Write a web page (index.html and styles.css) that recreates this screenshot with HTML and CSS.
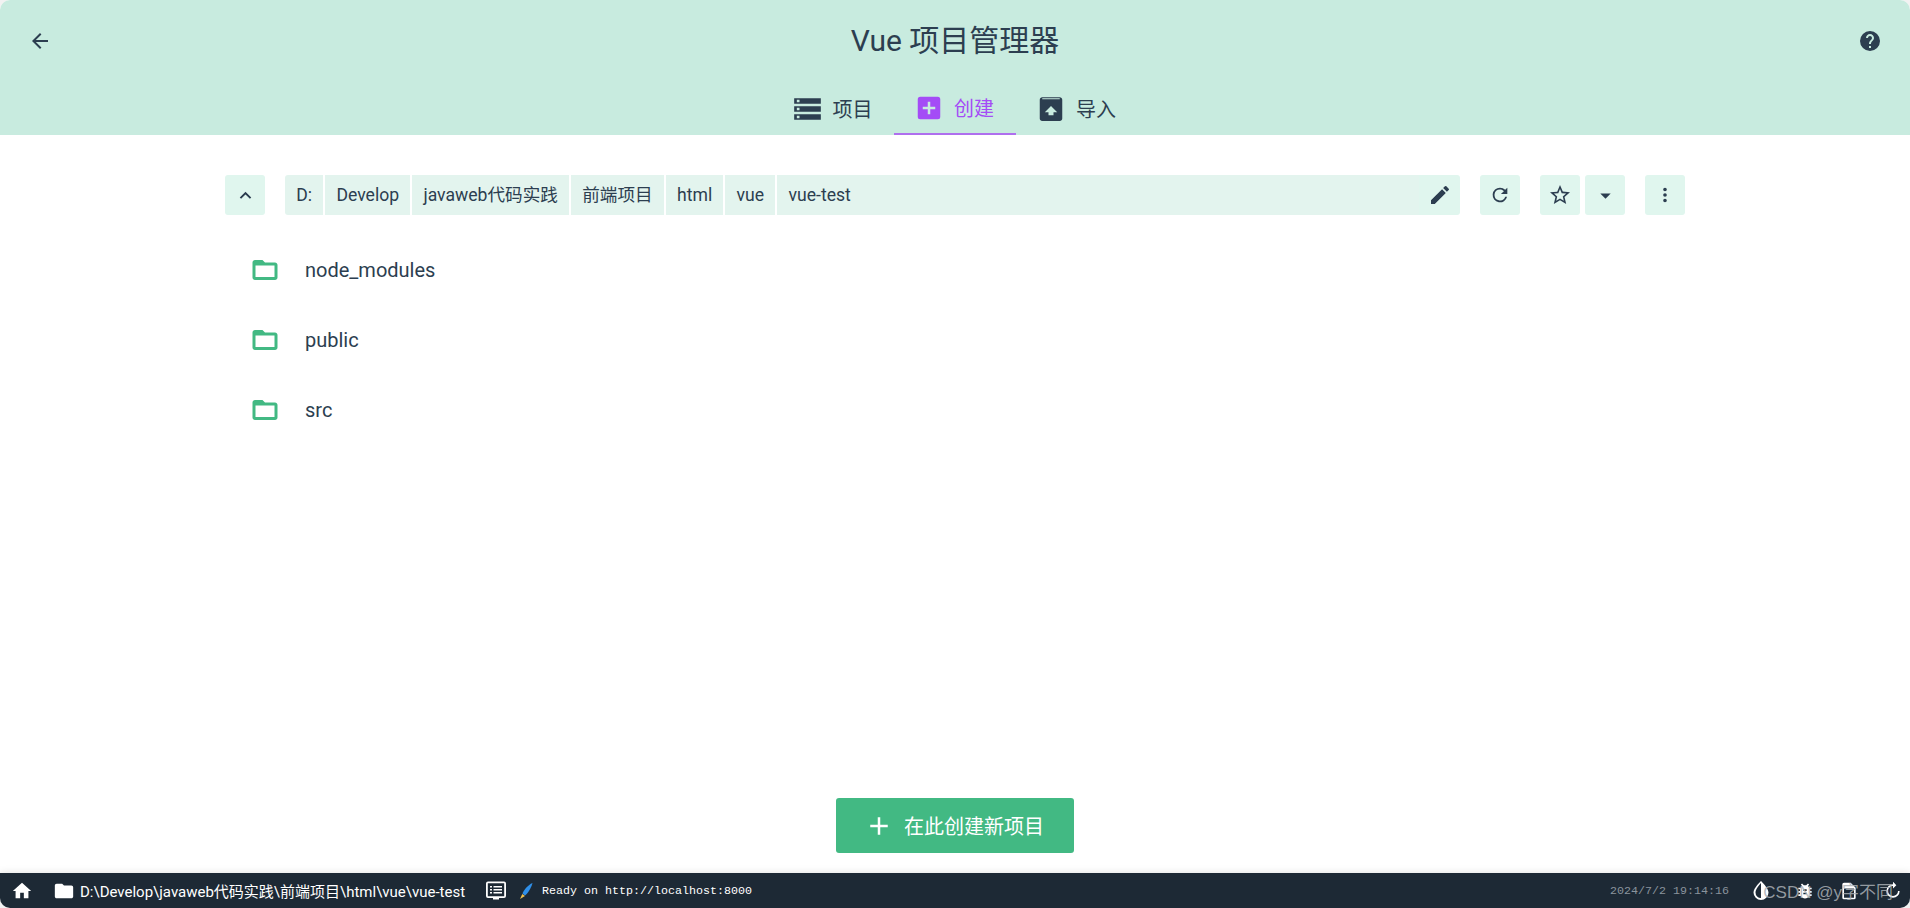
FILE: index.html
```html
<!DOCTYPE html>
<html lang="zh-CN">

<head>
  <meta charset="UTF-8" />
  <title>Vue 项目管理器</title>
  <link rel="stylesheet" href="styles.css">
</head>

<body>
  <div class="window">
    <header class="top">
      <div class="top-row">
        <button class="top-btn">
          <svg width="24" height="24" viewBox="0 0 24 24"><path d="M20 11H7.83l5.59-5.59L12 4l-8 8 8 8 1.41-1.41L7.83 13H20v-2z"/></svg>
        </button>
        <h1 class="title">Vue 项目管理器</h1>
        <button class="top-btn">
          <svg width="24" height="24" viewBox="0 0 24 24"><path d="M12 2a10 10 0 1 0 0 20 10 10 0 0 0 0-20zm1 17h-2v-2h2v2zm2.07-7.75l-.9.92C13.45 12.9 13 13.5 13 15h-2v-.5c0-1.1.45-2.1 1.17-2.83l1.24-1.26c.37-.36.59-.86.59-1.41 0-1.1-.9-2-2-2s-2 .9-2 2H8c0-2.21 1.79-4 4-4s4 1.79 4 4c0 .88-.36 1.68-.93 2.25z"/></svg>
        </button>
      </div>
      <nav class="tabs">
        <a class="tab tab-list">
          <svg width="27" height="32" viewBox="2 0 20 24"><path d="M2 20h20v-4H2v4zm2-3h2v2H4v-2zM2 4v4h20V4H2zm4 3H4V5h2v2zm-4 7h20v-4H2v4zm2-3h2v2H4v-2z"/></svg>
          <span>项目</span>
        </a>
        <a class="tab tab-active">
          <svg width="30" height="30" viewBox="0 0 24 24"><path d="M19 3H5a2 2 0 0 0-2 2v14a2 2 0 0 0 2 2h14a2 2 0 0 0 2-2V5a2 2 0 0 0-2-2zm-2 10h-4v4h-2v-4H7v-2h4V7h2v4h4v2z"/></svg>
          <span>创建</span>
        </a>
        <a class="tab">
          <svg width="30" height="30" viewBox="0 0 24 24"><path d="M19 2.500H5c-1.100 0-2 .9-2 2V19.500c0 1.100.9 2 2 2h14c1.100 0 2-.9 2-2V4.500c0-1.100-.9-2-2-2zM5 3.300h14v.8H5zM12 9.500l5 5h-3v2.500h-4v-2.500H7l5-5z" fill-rule="evenodd"/></svg>
          <span>导入</span>
        </a>
      </nav>
    </header>

    <main class="content">
      <div class="toolbar">
        <button class="tool-btn">
          <svg width="23" height="23" viewBox="0 0 24 24"><path d="M12 8l-6 6 1.41 1.41L12 10.830l4.590 4.580L18 14z"/></svg>
        </button>
        <div class="path">
          <span class="seg">D:</span>
          <span class="seg">Develop</span>
          <span class="seg">javaweb代码实践</span>
          <span class="seg">前端项目</span>
          <span class="seg">html</span>
          <span class="seg">vue</span>
          <span class="seg seg-last">vue-test</span>
          <button class="path-edit">
            <svg width="24" height="24" viewBox="0 0 24 24"><path d="M3 17.250V21h3.750L17.810 9.940l-3.750-3.750L3 17.250zM20.710 7.040a1 1 0 0 0 0-1.410l-2.340-2.340a1 1 0 0 0-1.410 0l-1.830 1.830 3.750 3.750 1.830-1.830z"/></svg>
          </button>
        </div>
        <button class="tool-btn">
          <svg width="22" height="22" viewBox="0 0 24 24"><path d="M17.650 6.350A7.960 7.960 0 0 0 12 4a8 8 0 1 0 7.730 10h-2.080A6 6 0 1 1 12 6c1.660 0 3.140.69 4.220 1.780L13 11h7V4l-2.350 2.350z"/></svg>
        </button>
        <div class="tool-group">
          <button class="tool-btn">
            <svg width="24" height="24" viewBox="0 0 24 24"><path d="M22 9.240l-7.190-.62L12 2 9.190 8.630 2 9.240l5.460 4.730L5.820 21 12 17.270 18.180 21l-1.630-7.030L22 9.240zM12 15.400l-3.760 2.270 1-4.280-3.320-2.880 4.380-.38L12 6.100l1.710 4.040 4.380.38-3.320 2.880 1 4.280L12 15.400z"/></svg>
          </button>
          <button class="tool-btn">
            <svg width="25" height="25" viewBox="0 0 24 24"><path d="M7 10l5 5 5-5z"/></svg>
          </button>
        </div>
        <button class="tool-btn">
          <svg width="22" height="22" viewBox="0 0 24 24"><path d="M12 8a2 2 0 1 0 0-4 2 2 0 0 0 0 4zm0 2a2 2 0 1 0 0 4 2 2 0 0 0 0-4zm0 6a2 2 0 1 0 0 4 2 2 0 0 0 0-4z"/></svg>
        </button>
      </div>

      <ul class="folders">
        <li class="folder">
          <svg width="30" height="30" viewBox="0 0 24 24"><path d="M20 6h-8l-2-2H4c-1.100 0-2 .9-2 2v12c0 1.100.9 2 2 2h16c1.100 0 2-.9 2-2V8c0-1.100-.9-2-2-2zm-.4 11.600H4.400V8.400h15.200z"/></svg>
          <span>node_modules</span>
        </li>
        <li class="folder">
          <svg width="30" height="30" viewBox="0 0 24 24"><path d="M20 6h-8l-2-2H4c-1.100 0-2 .9-2 2v12c0 1.100.9 2 2 2h16c1.100 0 2-.9 2-2V8c0-1.100-.9-2-2-2zm-.4 11.600H4.400V8.400h15.200z"/></svg>
          <span>public</span>
        </li>
        <li class="folder">
          <svg width="30" height="30" viewBox="0 0 24 24"><path d="M20 6h-8l-2-2H4c-1.100 0-2 .9-2 2v12c0 1.100.9 2 2 2h16c1.100 0 2-.9 2-2V8c0-1.100-.9-2-2-2zm-.4 11.600H4.400V8.400h15.200z"/></svg>
          <span>src</span>
        </li>
      </ul>

      <div class="actions">
        <button class="create-btn">
          <svg width="30" height="30" viewBox="0 0 24 24"><path d="M19 13h-6v6h-2v-6H5v-2h6V5h2v6h6v2z"/></svg>
          <span>在此创建新项目</span>
        </button>
      </div>
    </main>

    <footer class="status">
      <svg class="st-home" width="22" height="22" viewBox="0 0 24 24"><path d="M10 20v-6h4v6h5v-8h3L12 3 2 12h3v8z"/></svg>
      <svg class="st-folder" width="22" height="22" viewBox="0 0 24 24"><path d="M10 4H4c-1.100 0-2 .9-2 2v12c0 1.100.9 2 2 2h16c1.100 0 2-.9 2-2V8c0-1.100-.9-2-2-2h-8l-2-2z"/></svg>
      <span class="st-path">D:\Develop\javaweb代码实践\前端项目\html\vue\vue-test</span>
      <svg class="st-msg" width="24" height="24" viewBox="0 0 24 24"><path fill-rule="evenodd" d="M4 2.500h16a2 2 0 0 1 2 2V17a2 2 0 0 1-2 2h-5v1.500H9V19H4a2 2 0 0 1-2-2V4.500a2 2 0 0 1 2-2zM3.800 4.300v12.900h16.400V4.300zM6 7h2v1.500H6zm3.500 0H18v1.500H9.500zM6 10h2v1.500H6zm3.500 0H18v1.500H9.500zM6 13h2v1.500H6zm3.500 0H18v1.500H9.500z"/></svg>
      <svg class="st-brush" width="14" height="18" viewBox="0 0 14 18"><path d="M13.500 1C9 3 5 7.500 3.500 11.500l2.500 2C9 11 12.500 5.500 13.500 1z" fill="#2f8fe8"/><path d="M3.300 12L1 17l5-3z" fill="#f2c14e"/></svg>
      <span class="st-log">Ready on http://localhost:8000</span>
      <span class="st-time">2024/7/2 19:14:16</span>
      <div class="st-icons">
        <svg width="20" height="20" viewBox="2 3 20 20"><path d="M12 3S4.500 10 4.500 14.500a7.500 7.500 0 0 0 15 0C19.500 10 12 3 12 3zm0 17a5.500 5.500 0 0 1-5.500-5.500c0-2.700 3-6.700 5.500-9.500v15z"/></svg>
        <svg width="20" height="20" viewBox="0 0 24 24"><path d="M20 8h-2.810a6 6 0 0 0-1.820-1.960L17 4.410 15.590 3l-2.170 2.170a6 6 0 0 0-2.830 0L8.410 3 7 4.410l1.620 1.630C7.880 6.550 7.260 7.220 6.810 8H4v2h2.090c-.05.330-.09.660-.09 1v1H4v2h2v1c0 .34.040.67.090 1H4v2h2.810a6 6 0 0 0 10.380 0H20v-2h-2.090c.05-.33.090-.66.090-1v-1h2v-2h-2v-1c0-.34-.04-.67-.09-1H20V8zm-6 8h-4v-2h4v2zm0-4h-4v-2h4v2z"/></svg>
        <svg width="20" height="20" viewBox="0 0 24 24"><path d="M14 2H6a2 2 0 0 0-2 2v16a2 2 0 0 0 2 2h12a2 2 0 0 0 2-2V8l-6-6zm4 18H6V9h12v11z"/></svg>
        <svg width="20" height="20" viewBox="0 0 24 24"><path d="M12 4a8 8 0 1 0 8 8h-2a6 6 0 1 1-6-6v3l4-4-4-4v3z"/></svg>
      </div>
      <span class="watermark">CSDN @y字不同</span>
    </footer>
  </div>
</body>

</html>
```

FILE: styles.css
```css
* {
  box-sizing: border-box;
}

html,
body {
  height: 100%;
}

body {
  margin: 0;
  background-color: #f2f2f2;
  color: #2c3e50;
  font-family: Roboto, "Noto Sans CJK SC", sans-serif;
  overflow: hidden;
}

button {
  border: 0;
  padding: 0;
  color: inherit;
  font: inherit;
  background: none;
}

svg {
  display: block;
  flex: none;
  fill: currentColor;
}

.window {
  height: 908px;
  display: flex;
  flex-direction: column;
  background-color: #fff;
  border-radius: 10px;
  overflow: hidden;
}

/* header */
.top {
  height: 135px;
  flex: none;
  background-color: #c8ebdf;
}

.top-row {
  height: 82px;
  display: flex;
  align-items: center;
  justify-content: space-between;
  padding: 0 28px;
}

.top-btn {
  width: 24px;
  height: 24px;
}

.title {
  margin: 0;
  font-size: 30px;
  font-weight: 400;
  line-height: 1;
}

.tabs {
  height: 53px;
  display: flex;
  justify-content: center;
}

.tab {
  width: 122px;
  display: flex;
  align-items: center;
  justify-content: center;
  gap: 10px;
  font-size: 20px;
}

.tab svg {
  margin-left: -2px;
}

.tab-list {
  gap: 12px;
}

.tab-list svg {
  margin-left: 0;
}

.tab-active {
  color: #a44cf6;
  border-bottom: 2px solid #af6fee;
}

/* toolbar */
.content {
  flex: 1;
  min-height: 0;
  display: flex;
  flex-direction: column;
  padding: 40px 225px 0;
}

.toolbar {
  display: flex;
  gap: 20px;
  height: 40px;
}

.tool-btn {
  width: 40px;
  height: 40px;
  display: flex;
  align-items: center;
  justify-content: center;
  border-radius: 3px;
  background-color: #e0f6ee;
}

.tool-group {
  display: flex;
  gap: 5px;
}

.path {
  flex: 1;
  display: flex;
  gap: 2px;
  border-radius: 3px;
  overflow: hidden;
  font-size: 17.6px;
  line-height: 40px;
}

.seg {
  padding: 0 11.2px;
  background-color: #e3f4ee;
}

.seg-last {
  flex: 1;
}

.path-edit {
  width: 41px;
  margin-left: -2px;
  display: flex;
  align-items: center;
  justify-content: center;
  background-color: #e0f6ee;
}

/* folders */
.folders {
  margin: 20px 0 0;
  padding: 0 0 0 25px;
  list-style: none;
}

.folder {
  height: 70px;
  display: flex;
  align-items: center;
  gap: 25px;
  font-size: 20px;
}

.folder svg {
  color: #42b983;
}

/* bottom action */
.actions {
  margin-top: auto;
  padding-bottom: 20px;
  display: flex;
  justify-content: center;
}

.create-btn {
  width: 238px;
  height: 55px;
  padding-right: 2px;
  display: flex;
  align-items: center;
  justify-content: center;
  gap: 10px;
  border-radius: 3px;
  color: #fff;
  background-color: #42b983;
  font-size: 20px;
}

/* status bar */
.status {
  height: 35px;
  flex: none;
  position: relative;
  display: flex;
  align-items: center;
  background-color: #1d2935;
  color: #fff;
  box-shadow: 0 0 8px rgba(0, 0, 0, .12);
}

.st-home {
  margin-left: 11px;
}

.st-folder {
  margin-left: 20px;
}

.st-path {
  margin-left: 5px;
  font-size: 15px;
}

.st-msg {
  margin-left: 19px;
}

.st-brush {
  margin-left: 11px;
}

.st-log {
  margin-left: 9px;
  font-family: "Liberation Mono", monospace;
  font-size: 11.67px;
}

.st-time {
  margin-left: auto;
  color: #8a939c;
  font-family: "Liberation Mono", monospace;
  font-size: 11.67px;
}

.st-icons {
  margin-left: 22px;
  margin-right: 7px;
  display: flex;
  align-items: center;
  gap: 24px;
}

.watermark {
  position: absolute;
  top: 5px;
  right: 17px;
  color: rgba(170, 175, 180, .85);
  font-family: "Liberation Sans", "Noto Sans CJK SC", sans-serif;
  font-size: 17px;
}
```
